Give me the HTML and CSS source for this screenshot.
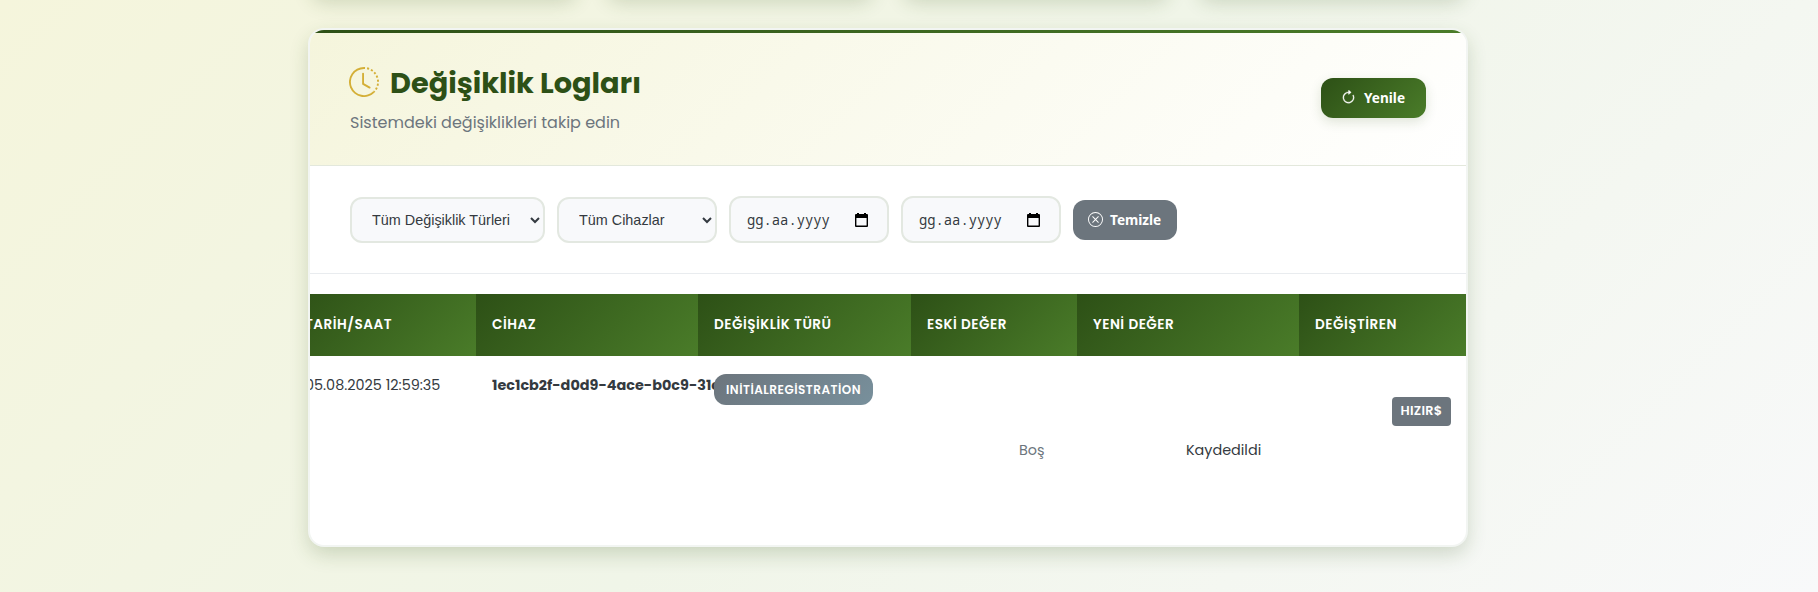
FILE: index.html
```html
<!DOCTYPE html>
<html lang="tr">
<head>
<meta charset="utf-8">
<title>Değişiklik Logları</title>
<link rel="stylesheet" href="styles.css">
</head>
<body>
<main class="page">
  <div class="stats"><div class="stat"></div><div class="stat"></div><div class="stat"></div><div class="stat"></div></div>
  <section class="card">
    <header class="card-header">
      <div>
        <h1 class="title">
          <svg class="title-icon" viewBox="0 0 16 16" fill="currentColor"><path d="M8.515 1.019A7 7 0 0 0 8 1V0a8 8 0 0 1 .589.022zm2.004.45a7 7 0 0 0-.985-.299l.219-.976q.576.129 1.126.342zm1.37.71a7 7 0 0 0-.439-.27l.493-.87a8 8 0 0 1 .979.654l-.615.789a7 7 0 0 0-.418-.302zm1.834 1.79a7 7 0 0 0-.653-.796l.724-.69q.406.429.747.91zm.744 1.352a7 7 0 0 0-.214-.468l.893-.45a8 8 0 0 1 .45 1.088l-.95.313a7 7 0 0 0-.179-.483m.53 2.507a7 7 0 0 0-.1-1.025l.985-.17q.1.58.116 1.17zm-.131 1.538q.05-.254.081-.51l.993.123a8 8 0 0 1-.23 1.155l-.964-.267q.069-.247.12-.501m-.952 2.379q.276-.436.486-.908l.914.405q-.24.54-.555 1.038zm-.964 1.205q.183-.183.35-.378l.758.653a8 8 0 0 1-.401.432z"/><path d="M8 1a7 7 0 1 0 4.95 11.95l.707.707A8.001 8.001 0 1 1 8 0z"/><path d="M7.5 3a.5.5 0 0 1 .5.5v5.21l3.248 1.856a.5.5 0 0 1-.496.868l-3.5-2A.5.5 0 0 1 7 9V3.5a.5.5 0 0 1 .5-.5"/></svg>
          <span>Değişiklik Logları</span>
        </h1>
        <p class="subtitle">Sistemdeki değişiklikleri takip edin</p>
      </div>
      <button class="btn btn-primary">
        <svg class="refresh-icon" viewBox="0 0 16 16" fill="currentColor"><path d="M8 3a5 5 0 1 0 4.546 2.914.5.5 0 0 1 .908-.417A6 6 0 1 1 8 2z"/><path d="M8 4.466V.534a.25.25 0 0 1 .41-.192l2.36 1.966c.12.1.12.284 0 .384L8.41 4.658A.25.25 0 0 1 8 4.466"/></svg>
        <span>Yenile</span>
      </button>
    </header>
    <div class="filters">
      <select class="field field-type"><option>Tüm Değişiklik Türleri</option></select>
      <select class="field field-device"><option>Tüm Cihazlar</option></select>
      <div class="field field-date"><span>gg.aa.yyyy</span><svg class="calendar" viewBox="0 0 13 14"><path fill="#000" fill-rule="evenodd" d="M2 0h2v1h5V0h2v1h1a1 1 0 0 1 1 1v11a1 1 0 0 1-1 1H1a1 1 0 0 1-1-1V2a1 1 0 0 1 1-1h1zM1.4 5v7.6h10.2V5z"/></svg></div>
      <div class="field field-date"><span>gg.aa.yyyy</span><svg class="calendar" viewBox="0 0 13 14"><path fill="#000" fill-rule="evenodd" d="M2 0h2v1h5V0h2v1h1a1 1 0 0 1 1 1v11a1 1 0 0 1-1 1H1a1 1 0 0 1-1-1V2a1 1 0 0 1 1-1h1zM1.4 5v7.6h10.2V5z"/></svg></div>
      <button class="btn btn-clear">
        <svg class="clear-icon" viewBox="0 0 16 16" fill="currentColor"><path d="M8 15A7 7 0 1 1 8 1a7 7 0 0 1 0 14m0 1A8 8 0 1 0 8 0a8 8 0 0 0 0 16"/><path d="M4.646 4.646a.5.5 0 0 1 .708 0L8 7.293l2.646-2.647a.5.5 0 0 1 .708.708L8.707 8l2.647 2.646a.5.5 0 0 1-.708.708L8 8.707l-2.646 2.647a.5.5 0 0 1-.708-.708L7.293 8 4.646 5.354a.5.5 0 0 1 0-.708"/></svg>
        <span>Temizle</span>
      </button>
    </div>
    <div class="table">
      <div class="row head">
        <div class="th"><span>TARİH/SAAT</span></div><div class="th"><span>CİHAZ</span></div><div class="th"><span>DEĞİŞİKLİK TÜRÜ</span></div><div class="th"><span>ESKİ DEĞER</span></div><div class="th"><span>YENİ DEĞER</span></div><div class="th"><span>DEĞİŞTİREN</span></div>
      </div>
      <div class="row body">
        <div class="td"><span>05.08.2025 12:59:35</span></div>
        <div class="td td-device"><span>1ec1cb2f-d0d9-4ace-b0c9-31c</span></div>
        <div class="td"><span class="badge">INİTİALREGİSTRATİON</span></div>
        <div class="td td-old"><span>Boş</span></div>
        <div class="td td-new"><span>Kaydedildi</span></div>
        <div class="td td-by"><span class="tag">HIZIR$</span></div>
      </div>
    </div>
  </section>
</main>
</body>
</html>
```
FILE: styles.css
```css
* { box-sizing: border-box; }
body {
  margin: 0;
  height: 592px;
  overflow: hidden;
  font-family: Poppins, Inter, sans-serif;
  color: #343a40;
  background: linear-gradient(135deg, #f5f5dc 0%, #f0f5e8 50%, #f8f9fa 100%);
}
.page { width: 1160px; margin-left: 308px; }
.stats { display: grid; grid-template-columns: repeat(4, 1fr); gap: 24px; height: 0; }
.stat { height: 60px; margin-top: -62px; border-radius: 16px; box-shadow: 0 8px 20px -4px rgba(45, 80, 22, .2); }
.card {
  position: relative;
  height: 519px;
  margin-top: 28px;
  overflow: hidden;
  border: 2px solid #f2f5f2;
  border-radius: 16px;
  background: #fff;
  box-shadow: 0 8px 20px -1px rgba(45, 80, 22, .2);
}
.card::before {
  content: "";
  position: absolute;
  inset: 0 0 auto;
  height: 3px;
  background: linear-gradient(90deg, #2d5016, #4a7c29);
}
.card-header {
  display: flex;
  justify-content: space-between;
  align-items: flex-start;
  height: 136px;
  padding: 37px 40px 0 39px;
  border-bottom: 1px solid #e3e8dc;
  background: linear-gradient(135deg, #f5f5dc 0%, #fff 100%);
}
.title {
  display: flex;
  align-items: flex-start;
  gap: 11px;
  height: 38px;
  margin: 0;
  color: #2d5016;
  font-size: 28.8px;
  line-height: 32px;
  font-weight: 700;
}
.title-icon { width: 30px; height: 30px; color: #d4af37; }
.subtitle { margin: 6px 0 0 1px; color: #6c757d; font-size: 16px; line-height: 24px; }
.btn {
  display: flex;
  align-items: center;
  height: 40px;
  padding: 0;
  border: 0;
  border-radius: 12px;
  color: #fff;
  font: 700 13.6px/20px "Noto Sans", sans-serif;
}
.btn-primary {
  width: 105px;
  margin-top: 11px;
  padding-left: 20px;
  gap: 8px;
  background: linear-gradient(135deg, #2d5016, #4a7c29);
  box-shadow: 0 4px 12px rgba(45, 80, 22, .15);
}
.refresh-icon { width: 15px; height: 15px; margin-top: -2px; stroke: currentColor; stroke-width: .4; }
.btn-clear { width: 104px; padding-left: 15px; gap: 7px; background: #6c757d; }
.clear-icon { width: 15px; height: 15px; }
.filters {
  display: flex;
  align-items: center;
  gap: 12px;
  height: 108px;
  padding: 0 40px;
  border-bottom: 1px solid #e9ecef;
}
.field {
  height: 46px;
  border: 2px solid #e3e8e1;
  border-radius: 12px;
  color: #343a40;
  background-color: #f8f9fb;
  font: 14.4px "Liberation Sans", sans-serif;
}
.field-type { width: 195px; padding: 0 0 0 16px; }
.field-device { width: 160px; padding: 0 0 0 16px; }
.field-date {
  display: flex;
  align-items: center;
  justify-content: space-between;
  width: 160px;
  height: 47px;
  padding: 0 19px 0 16px;
  font: 13.8px "Noto Sans Mono", "DejaVu Sans Mono", monospace;
}
.calendar { width: 13px; height: 14px; }
.table { margin-top: 20px; overflow: hidden; }
.row {
  display: grid;
  grid-template-columns: 187px 222px 213px 166px 222px 167px;
  justify-content: end;
}
.th {
  height: 62px;
  padding: 20px 0 0 16px;
  color: #fff;
  background: linear-gradient(135deg, #2d5016, #4a7c29);
  font-size: 13.6px;
  line-height: 22px;
  font-weight: 600;
  letter-spacing: .5px;
  white-space: nowrap;
}
.td { padding: 18px 0 0 16px; font-size: 14.4px; line-height: 22px; white-space: nowrap; }
.td-device { font-weight: 700; }
.td-old { padding: 83px 0 0 108px; color: #6c757d; }
.td-new { padding: 83px 0 0 109px; }
.td-by { padding: 41px 0 0 93px; }
.badge, .tag { display: flex; align-items: center; justify-content: center; color: #fff; font-weight: 600; }
.badge {
  position: relative;
  width: 159px;
  height: 31px;
  border-radius: 12px;
  background: linear-gradient(135deg, #6c757d, #78909c);
  font-size: 12px;
  letter-spacing: .5px;
}
.tag {
  width: 59px;
  height: 29px;
  padding-bottom: 2px;
  border-radius: 4px;
  background: #6c757d;
  font-size: 12.8px;
  letter-spacing: .3px;
}
```
